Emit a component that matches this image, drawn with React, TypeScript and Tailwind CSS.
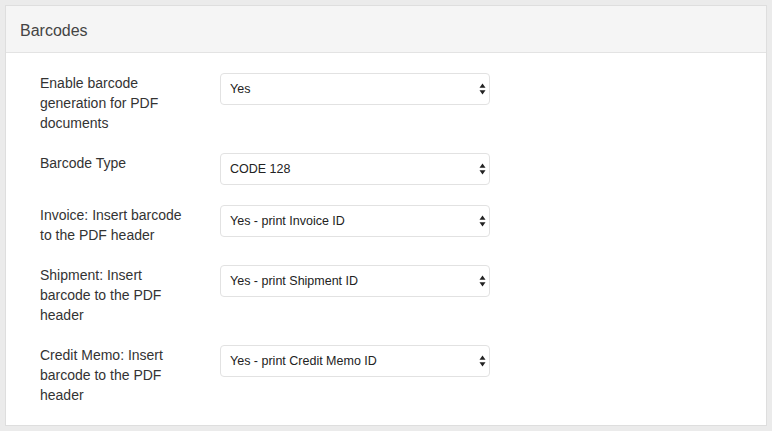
import React from 'react';

const rows = [
  { label: 'Enable barcode generation for PDF documents', value: 'Yes' },
  { label: 'Barcode Type', value: 'CODE 128' },
  { label: 'Invoice: Insert barcode to the PDF header', value: 'Yes - print Invoice ID' },
  { label: 'Shipment: Insert barcode to the PDF header', value: 'Yes - print Shipment ID' },
  { label: 'Credit Memo: Insert barcode to the PDF header', value: 'Yes - print Credit Memo ID' },
];

const Arrows: React.FC = () => (
  <svg width="7" height="12" viewBox="0 0 7 12" className="shrink-0">
    <path d="M3.5 0.5 L6.5 4.8 H0.5 Z" fill="#222" />
    <path d="M3.5 11.5 L6.5 7.2 H0.5 Z" fill="#222" />
  </svg>
);

export default function App() {
  return (
    <div
      className="min-h-[431px] w-[772px] bg-[#ebebeb] p-[5px]"
      style={{ fontFamily: '"Liberation Sans", Arial, sans-serif' }}
    >
      <div className="w-[762px] border border-[#dedede] bg-white">
        {/* Header */}
        <div className="flex h-[47px] items-center border-b border-[#e3e3e3] bg-[#f5f5f5] px-[14px] pt-[3px]">
          <span className="text-[16px] text-[#444]">Barcodes</span>
        </div>

        {/* Body */}
        <div className="flex flex-col gap-5 pt-5 pb-5 pl-[34px]">
          {rows.map((r) => (
            <div key={r.label} className="flex items-start">
              <div className="mr-5 w-[145px] text-[14px] leading-[20px] text-[#333]">{r.label}</div>
              <div className="ml-[15px] flex h-[32px] w-[270px] items-center justify-between rounded-[4px] border border-[#e2e2e2] bg-white pr-[3px] pl-[9px]">
                <span className="text-[12.5px] text-[#222]">{r.value}</span>
                <Arrows />
              </div>
            </div>
          ))}
        </div>
      </div>
    </div>
  );
}
